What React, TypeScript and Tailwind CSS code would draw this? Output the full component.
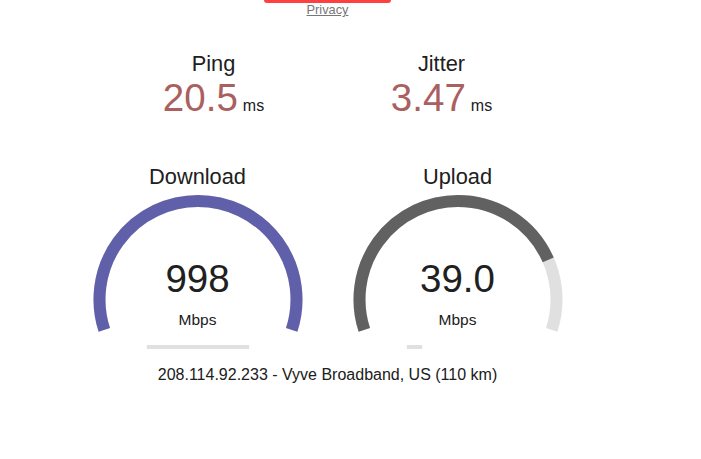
import React from 'react';

interface MetricProps {
  name: string;
  value: string;
  unit: string;
}

const Metric: React.FC<MetricProps> = ({ name, value, unit }) => {
  return (
    <div className="w-[224px] text-center">
      <div className="text-[21.8px] leading-[26px]">{name}</div>
      <div className="mt-[1px] h-[40px] flex justify-center items-baseline whitespace-nowrap">
        <span className="text-[38.5px] leading-[40px] text-[#aa6060]">{value}</span>
        <span className="ml-[5px] text-[16px] leading-[18px]">{unit}</span>
      </div>
    </div>
  );
};

interface GaugeProps {
  name: string;
  value: string;
  amount: number; // 0..100 of the arc
  progress: number; // 0..1 of the bar underneath
  color: string;
}

const ARC = 'M 34.32 139.94 A 98.5 98.5 0 1 1 221.68 139.94';

const Gauge: React.FC<GaugeProps> = ({ name, value, amount, progress, color }) => {
  return (
    <div className="w-[256px] text-center">
      <div className="text-[21.8px] leading-[26px]">{name}</div>
      <div className="grid">
        <svg
          className="[grid-area:1/1]"
          width="256"
          height="164"
          viewBox="0 0 256 164"
        >
          <path d={ARC} fill="none" stroke="#e0e0e0" strokeWidth="12" />
          <path
            d={ARC}
            fill="none"
            stroke={color}
            strokeWidth="12"
            pathLength={100}
            strokeDasharray={`${amount} 100`}
          />
          <rect x="76.8" y="155" width={102.4 * progress} height="4" fill="#e0e0e0" />
        </svg>
        <div className="[grid-area:1/1] flex flex-col items-center pt-[69px]">
          <div className="text-[38.5px] leading-[40px]">{value}</div>
          <div className="mt-[12px] text-[15.5px] leading-[18px]">Mbps</div>
        </div>
      </div>
    </div>
  );
};

const App: React.FC = () => {
  return (
    <div className="w-[655px] h-[459px] bg-white text-center text-[#202020] font-['Liberation_Sans',Arial,sans-serif]">
      {/* start/stop button, scrolled mostly out of view */}
      <div className="mx-auto w-[127px] h-[3px] bg-[#ff4040] rounded-b-[3px]" />
      <div className="leading-[12px]">
        <a className="text-[12.8px] text-[#777777] underline" href="#">
          Privacy
        </a>
      </div>

      <div className="mt-[35px] flex justify-center gap-[4px]">
        <Metric name="Ping" value="20.5" unit="ms" />
        <Metric name="Jitter" value="3.47" unit="ms" />
      </div>

      <div className="mt-[46px] flex justify-center gap-[4px]">
        <Gauge name="Download" value="998" amount={100} progress={1} color="#6060aa" />
        <Gauge name="Upload" value="39.0" amount={80.7} progress={0.15} color="#616161" />
      </div>

      <div className="mt-[12px] text-[16px] leading-[18px]">
        208.114.92.233 - Vyve Broadband, US (110 km)
      </div>
    </div>
  );
};

export default App;
